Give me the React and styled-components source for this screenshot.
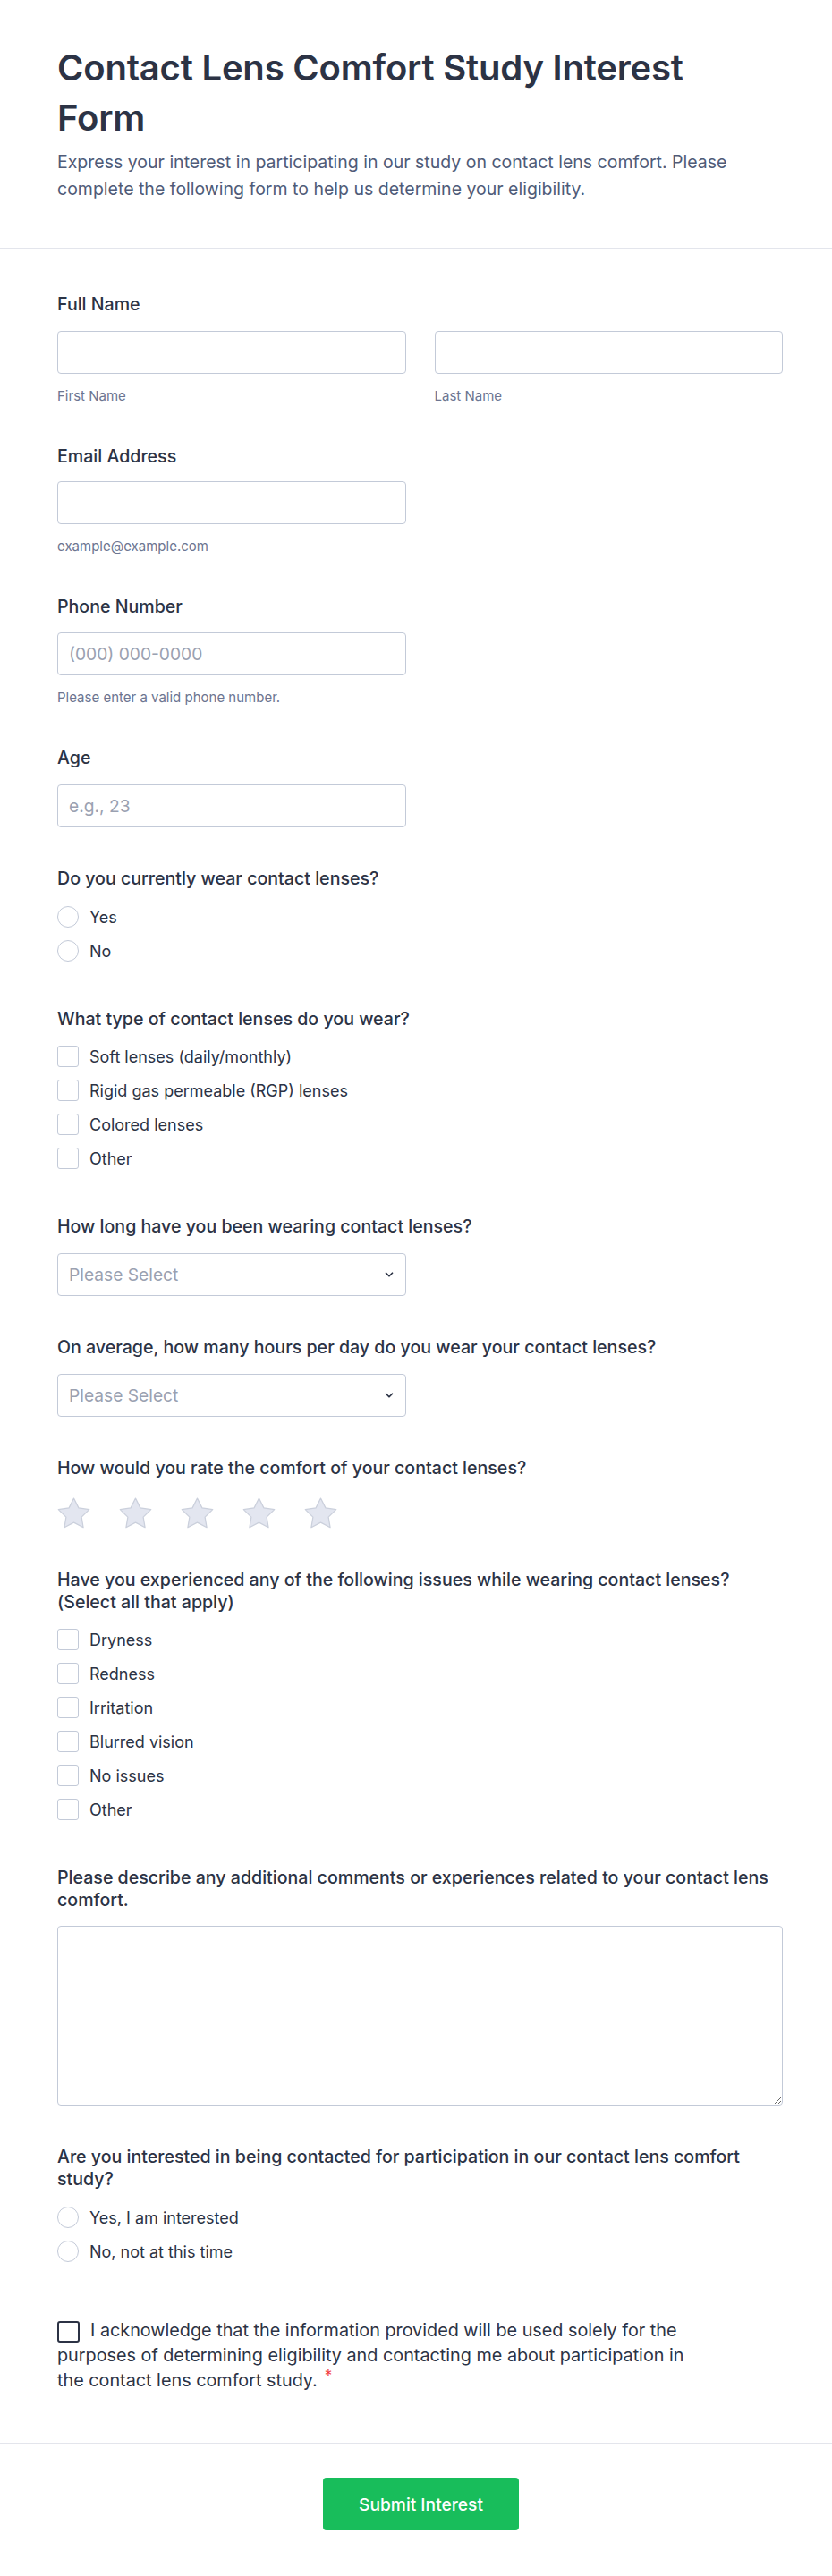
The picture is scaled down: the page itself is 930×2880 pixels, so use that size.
import React from "react";
import styled, { createGlobalStyle } from "styled-components";

const GlobalStyle = createGlobalStyle`
  * { box-sizing: border-box; }
  body {
    margin: 0;
    background: #ffffff;
    font-family: Inter, "Noto Sans", "Liberation Sans", sans-serif;
    color: #2c3345;
  }
`;

const Page = styled.div`
  width: 930px;
  background: #ffffff;
`;

const Header = styled.header`
  padding: 48px 55px 51px 64px;
  border-bottom: 1px solid #e3e5ec;
`;

const HeaderInner = styled.div`
  max-width: 790px;
`;

const Title = styled.h1`
  margin: 0;
  font-size: 40px;
  line-height: 56px;
  font-weight: 600;
  color: #2c3345;
  letter-spacing: -0.2px;
`;

const Description = styled.p`
  margin: 6px 0 0;
  font-size: 19.5px;
  line-height: 30px;
  color: #4f5b78;
`;

const Body = styled.main`
  display: flex;
  flex-direction: column;
  gap: 45px;
  padding: 50px 55px 56px 64px;
  border-bottom: 1px solid #e3e5ec;
`;

const Field = styled.section`
  display: flex;
  flex-direction: column;
`;

const Label = styled.label`
  display: block;
  font-size: 19.6px;
  line-height: 25px;
  font-weight: 500;
  color: #2c3345;
  margin-bottom: ${(p) => p.$gap ?? 16}px;
`;

const NameGrid = styled.div`
  display: grid;
  grid-template-columns: 1fr 1fr;
  column-gap: 32px;
`;

const Column = styled.div`
  display: flex;
  flex-direction: column;
`;

const TextInput = styled.input`
  width: ${(p) => (p.$full ? "100%" : "calc(50% - 16px)")};
  height: 48px;
  padding: 0 12px;
  border: 1px solid #c3cad8;
  border-radius: 4px;
  font-family: inherit;
  font-size: 19.2px;
  color: #2c3345;
  background: #fff;
  &::placeholder { color: #9aa1b1; }
`;

const SubLabel = styled.span`
  margin-top: 15px;
  font-size: 15px;
  line-height: 20px;
  color: #6c7591;
`;

const Options = styled.div`
  display: flex;
  flex-direction: column;
  margin-top: ${(p) => (p.$top ?? 11)}px;
`;

const OptionRow = styled.label`
  display: flex;
  align-items: center;
  gap: 12px;
  height: 38px;
  font-size: 18px;
  color: #2c3345;
`;

const RadioMark = styled.span`
  width: 24px;
  height: 24px;
  border: 1px solid #c3cad8;
  border-radius: 50%;
  background: #fff;
  flex-shrink: 0;
`;

const CheckMark = styled.span`
  width: 24px;
  height: 24px;
  border: 1px solid #c3cad8;
  border-radius: 3px;
  background: #fff;
  flex-shrink: 0;
`;

const SelectWrap = styled.div`
  position: relative;
  width: calc(50% - 16px);
`;

const Select = styled.select`
  width: 100%;
  height: 48px;
  padding: 0 36px 0 12px;
  border: 1px solid #c3cad8;
  border-radius: 4px;
  background: #fff;
  font-family: inherit;
  font-size: 19.2px;
  color: #9aa1b1;
  appearance: none;
  -webkit-appearance: none;
`;

const Chevron = styled.svg`
  position: absolute;
  right: 12px;
  top: 50%;
  transform: translateY(-50%);
  pointer-events: none;
`;

const Stars = styled.div`
  display: flex;
  gap: 32px;
  margin-top: 20px;
`;

const StarIcon = styled.svg`
  width: 37px;
  height: 35px;
  overflow: visible;
`;

const TextArea = styled.textarea`
  width: 100%;
  height: 201px;
  padding: 10px 12px;
  border: 1px solid #c3cad8;
  border-radius: 4px;
  font-family: inherit;
  font-size: 16px;
  color: #2c3345;
  background: #fff;
`;

const Consent = styled.p`
  margin: 10px 0 0;
  max-width: 720px;
  font-size: 19.8px;
  line-height: 28px;
  color: #2c3345;
`;

const ConsentBox = styled.span`
  display: inline-block;
  width: 25px;
  height: 24px;
  margin-right: 12px;
  border: 2px solid #2c3345;
  border-radius: 3px;
  vertical-align: -7px;
`;

const Required = styled.sup`
  color: #f23a3c;
  font-size: 17px;
  margin-left: 8px;
  vertical-align: 6px;
  line-height: 0;
`;

const Footer = styled.footer`
  display: flex;
  justify-content: center;
  padding: 38px 0 50px 11px;
`;

const SubmitButton = styled.button`
  height: 59px;
  padding: 0 40px;
  border: none;
  border-radius: 4px;
  background: #18bd5b;
  color: #fff;
  font-family: inherit;
  font-size: 19.2px;
  font-weight: 500;
  cursor: pointer;
`;

const Star = () => (
  <StarIcon viewBox="2 2 20 19.5">
    <polygon
      points="12,2.6 15.0,8.6 21.6,9.6 16.8,14.3 17.9,20.8 12,17.7 6.1,20.8 7.2,14.3 2.4,9.6 9.0,8.6"
      fill="#e3e6f0"
      stroke="#cbd0dc"
      strokeWidth="0.7"
      strokeLinejoin="round"
    />
  </StarIcon>
);

const RadioGroup = ({ items }) => (
  <Options>
    {items.map((t) => (
      <OptionRow key={t}>
        <RadioMark />
        {t}
      </OptionRow>
    ))}
  </Options>
);

const CheckGroup = ({ items }) => (
  <Options $top={10}>
    {items.map((t) => (
      <OptionRow key={t}>
        <CheckMark />
        {t}
      </OptionRow>
    ))}
  </Options>
);

const Dropdown = () => (
  <SelectWrap>
    <Select defaultValue="">
      <option value="">Please Select</option>
    </Select>
    <Chevron width="14" height="14" viewBox="0 0 24 24" fill="none" stroke="#2c3345" strokeWidth="3" strokeLinecap="round" strokeLinejoin="round">
      <path d="m6 9 6 6 6-6" />
    </Chevron>
  </SelectWrap>
);

export default function App() {
  return (
    <Page>
      <GlobalStyle />
      <Header>
        <HeaderInner>
          <Title>Contact Lens Comfort Study Interest Form</Title>
          <Description>
            Express your interest in participating in our study on contact lens comfort. Please
            complete the following form to help us determine your eligibility.
          </Description>
        </HeaderInner>
      </Header>

      <Body>
        <Field>
          <Label $gap={17}>Full Name</Label>
          <NameGrid>
            <Column>
              <TextInput $full />
              <SubLabel>First Name</SubLabel>
            </Column>
            <Column>
              <TextInput $full />
              <SubLabel>Last Name</SubLabel>
            </Column>
          </NameGrid>
        </Field>

        <Field>
          <Label $gap={15}>Email Address</Label>
          <TextInput type="email" />
          <SubLabel>example@example.com</SubLabel>
        </Field>

        <Field>
          <Label>Phone Number</Label>
          <TextInput placeholder="(000) 000-0000" />
          <SubLabel>Please enter a valid phone number.</SubLabel>
        </Field>

        <Field>
          <Label $gap={17}>Age</Label>
          <TextInput placeholder="e.g., 23" />
        </Field>

        <Field>
          <Label $gap={0}>Do you currently wear contact lenses?</Label>
          <RadioGroup items={["Yes", "No"]} />
        </Field>

        <Field>
          <Label $gap={0}>What type of contact lenses do you wear?</Label>
          <CheckGroup
            items={[
              "Soft lenses (daily/monthly)",
              "Rigid gas permeable (RGP) lenses",
              "Colored lenses",
              "Other",
            ]}
          />
        </Field>

        <Field>
          <Label $gap={17}>How long have you been wearing contact lenses?</Label>
          <Dropdown />
        </Field>

        <Field>
          <Label $gap={17}>On average, how many hours per day do you wear your contact lenses?</Label>
          <Dropdown />
        </Field>

        <Field>
          <Label $gap={0}>How would you rate the comfort of your contact lenses?</Label>
          <Stars>
            {[0, 1, 2, 3, 4].map((i) => (
              <Star key={i} />
            ))}
          </Stars>
        </Field>

        <Field>
          <Label $gap={0}>
            Have you experienced any of the following issues while wearing contact lenses?
            (Select all that apply)
          </Label>
          <CheckGroup
            items={["Dryness", "Redness", "Irritation", "Blurred vision", "No issues", "Other"]}
          />
        </Field>

        <Field>
          <Label $gap={16}>
            Please describe any additional comments or experiences related to your contact lens
            comfort.
          </Label>
          <TextArea />
        </Field>

        <Field>
          <Label $gap={0}>
            Are you interested in being contacted for participation in our contact lens comfort
            study?
          </Label>
          <RadioGroup items={["Yes, I am interested", "No, not at this time"]} />
        </Field>

        <Field>
          <Consent>
            <ConsentBox />
            I acknowledge that the information provided will be used solely for the purposes of
            determining eligibility and contacting me about participation in the contact lens
            comfort study.
            <Required>*</Required>
          </Consent>
        </Field>
      </Body>

      <Footer>
        <SubmitButton type="button">Submit Interest</SubmitButton>
      </Footer>
    </Page>
  );
}
